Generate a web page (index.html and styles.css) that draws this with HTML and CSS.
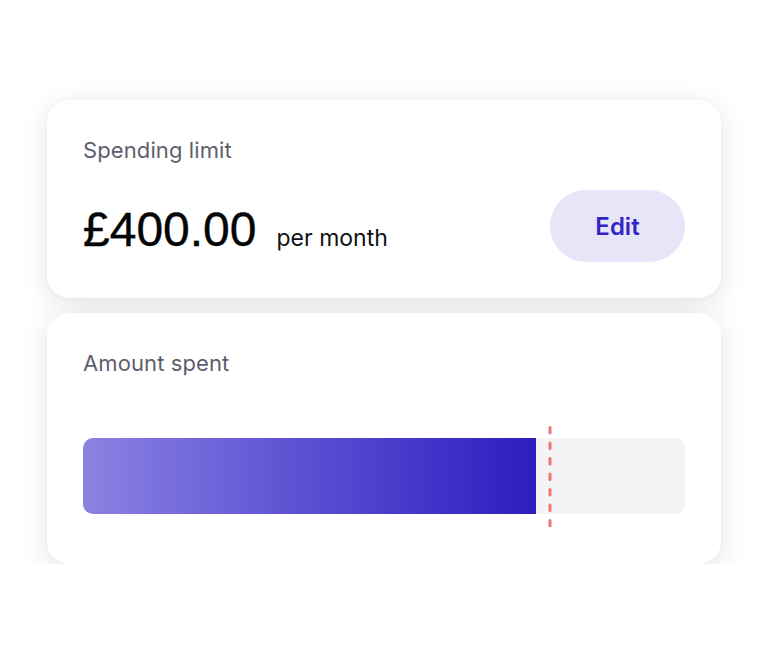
FILE: index.html
```html
<!DOCTYPE html>
<html lang="en">
<head>
<meta charset="utf-8">
<title>Spending limit</title>
<link rel="stylesheet" href="styles.css">
</head>
<body>
<main class="stack">
  <section class="card card-limit">
    <h2 class="label">Spending limit</h2>
    <div class="limit-row">
      <div class="amount-group">
        <span class="amount">£400.00</span>
        <span class="period">per month</span>
      </div>
      <button class="edit-btn" type="button">Edit</button>
    </div>
  </section>
  <section class="card card-spent">
    <h2 class="label">Amount spent</h2>
    <div class="bar-wrap">
      <div class="track">
        <div class="fill" style="width: 75.25%"></div>
      </div>
      <svg class="limit-marker" style="left: 77.6%" width="4" height="101" viewBox="0 0 4 101" aria-hidden="true">
        <line x1="2" y1="1.5" x2="2" y2="100" stroke="#f07474" stroke-width="3" stroke-linecap="round" stroke-dasharray="5.5 10"/>
      </svg>
    </div>
  </section>
</main>
</body>
</html>
```
FILE: styles.css
```css
* { box-sizing: border-box; }

html, body {
  margin: 0;
  background: #ffffff;
}

body {
  font-family: "Inter", "Noto Sans", sans-serif;
  color: #0b0b0d;
}

.stack {
  width: 674px;
  margin: 100px 0 0 47px;
  display: flex;
  flex-direction: column;
  gap: 15px;
}

.card {
  background: #ffffff;
  border-radius: 22px;
  box-shadow: 0 6px 28px rgba(0, 0, 0, 0.11), 0 1px 4px rgba(0, 0, 0, 0.03);
  padding: 36px;
}

.label {
  margin: 0;
  font-size: 22px;
  line-height: 28px;
  font-weight: 400;
  color: #605e6e;
  letter-spacing: 0.1px;
}

.limit-row {
  margin-top: 26px;
  display: flex;
  align-items: center;
  justify-content: space-between;
}

.amount-group {
  display: flex;
  align-items: baseline;
  gap: 20px;
  padding-top: 8px;
}

.amount {
  font-family: "Liberation Sans", Arial, sans-serif;
  font-size: 48px;
  line-height: 56px;
  font-weight: 400;
  color: #050505;
  -webkit-text-stroke: 0.4px #050505;
}

.period {
  font-size: 23px;
  font-weight: 400;
  color: #111114;
}

.edit-btn {
  width: 135px;
  height: 72px;
  border: none;
  border-radius: 36px;
  background: #e7e5f8;
  color: #3524c6;
  font-family: inherit;
  font-size: 24px;
  font-weight: 600;
  padding: 0;
}

.card-spent {
  padding-bottom: 38px;
}

.bar-wrap {
  position: relative;
  margin-top: 49px;
  padding: 12px 0;
}

.track {
  height: 76px;
  border-radius: 10px;
  background: #f4f4f4;
  overflow: hidden;
}

.fill {
  height: 100%;
  background: linear-gradient(90deg, #8b82e2 0%, #5a4ed2 50%, #2d1dbf 100%);
}

.limit-marker {
  position: absolute;
  top: 0;
  margin-left: -2px;
  display: block;
}
```
